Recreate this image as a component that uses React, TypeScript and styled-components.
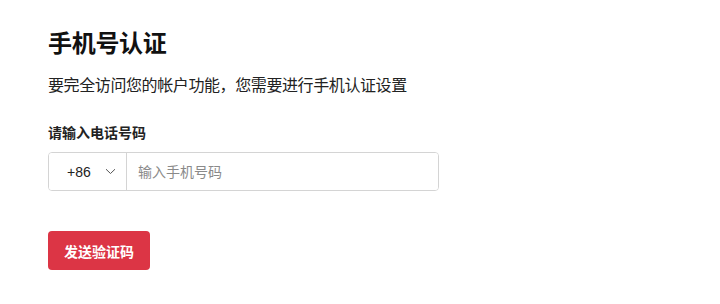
import React from "react"
import styled, { createGlobalStyle } from "styled-components"

const GlobalStyle = createGlobalStyle`
  html, body {
    margin: 0;
    padding: 0;
    background: #ffffff;
  }
  body {
    font-family: "Liberation Sans", "Noto Sans CJK SC", sans-serif;
    color: #212529;
  }
`

const Page = styled.main`
  display: flex;
  flex-direction: column;
  align-items: flex-start;
  padding: 30px 48px 0;
`

const Title = styled.h2`
  margin: 0;
  font-size: 24px;
  line-height: 28px;
  font-weight: 700;
  letter-spacing: -0.3px;
  color: #111;
`

const Lead = styled.p`
  margin: 16px 0 0;
  font-size: 16px;
  line-height: 24px;
  letter-spacing: -0.4px;
  color: #222;
`

const Label = styled.label`
  margin-top: 25px;
  font-size: 14px;
  line-height: 21px;
  font-weight: 700;
  color: #222;
`

const InputGroup = styled.div`
  display: flex;
  margin-top: 8px;
  width: 391px;
  height: 39px;
  box-sizing: border-box;
  border: 1px solid #d4d4d4;
  border-radius: 4px;
  overflow: hidden;
`

const CountrySelect = styled.button`
  display: flex;
  align-items: center;
  justify-content: space-between;
  width: 78px;
  flex: none;
  padding: 0 10px 0 18px;
  box-sizing: border-box;
  border: none;
  border-right: 1px solid #d4d4d4;
  background: #fff;
  font-family: inherit;
  font-size: 14px;
  color: #222;
`

const PhoneInput = styled.input`
  flex: 1;
  border: none;
  outline: none;
  padding: 0 11px;
  font-family: inherit;
  font-size: 14px;
  color: #222;
  &::placeholder {
    color: #8a8a8a;
  }
`

const SendButton = styled.button`
  margin-top: 40px;
  height: 39px;
  padding: 0 16px;
  border: none;
  border-radius: 4px;
  background: #dc3545;
  color: #fff;
  font-family: inherit;
  font-size: 14px;
  font-weight: 700;
`

const Chevron = () => (
  <svg width="11" height="7" viewBox="0 0 11 7" fill="none">
    <path d="M1 1.2l4.5 4.3L10 1.2" stroke="#555" strokeWidth="1" />
  </svg>
)

const App = () => {
  return (
    <>
      <GlobalStyle />
      <Page>
        <Title>手机号认证</Title>
        <Lead>要完全访问您的帐户功能，您需要进行手机认证设置</Lead>
        <Label htmlFor="phone">请输入电话号码</Label>
        <InputGroup>
          <CountrySelect type="button">
            +86
            <Chevron />
          </CountrySelect>
          <PhoneInput id="phone" placeholder="输入手机号码" />
        </InputGroup>
        <SendButton type="button">发送验证码</SendButton>
      </Page>
    </>
  )
}

export default App
